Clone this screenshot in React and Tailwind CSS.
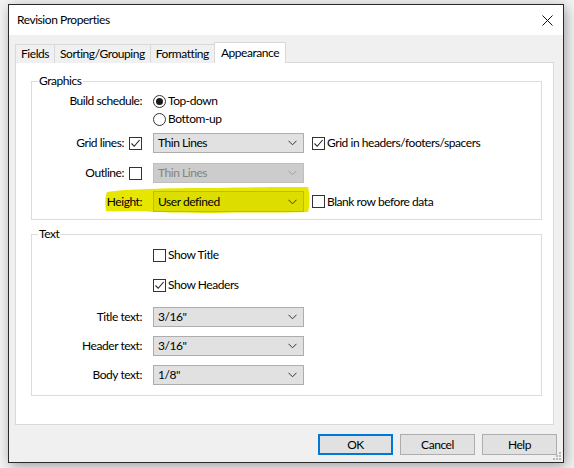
import React from 'react';

const FONT = { fontFamily: 'Lato, "Liberation Sans", sans-serif' };

function Check({ checked }) {
  return (
    <span className="w-[13px] h-[13px] border border-[#333] bg-white flex items-center justify-center shrink-0">
      {checked && (
        <svg width="11" height="11" viewBox="0 0 11 11">
          <path d="M1.5 5.5 L4.2 8.3 L9.6 2" fill="none" stroke="#222" strokeWidth="1.1" />
        </svg>
      )}
    </span>
  );
}

function Radio({ checked }) {
  return (
    <span className="w-[13px] h-[13px] rounded-full border border-[#333] bg-white flex items-center justify-center shrink-0">
      {checked && <span className="w-[7px] h-[7px] rounded-full bg-[#1a1a1a]" />}
    </span>
  );
}

function Select({ value, disabled, marked }) {
  let look = 'bg-[#e1e1e1] border-[#adadad] text-black';
  if (disabled) look = 'bg-[#cccccc] border-[#bfbfbf] text-[#838383]';
  if (marked) look = 'bg-[rgba(0,0,0,0.04)] border-[#a8a8a8] text-black';
  return (
    <div className={`w-[151px] h-full border flex items-center pl-[4px] pr-[6px] ${look}`}>
      <span className="flex-1">{value}</span>
      <svg width="9" height="6" viewBox="0 0 9 6">
        <path d="M0.5 0.8 L4.5 4.8 L8.5 0.8" fill="none" stroke={disabled ? '#a0a0a0' : '#333'} strokeWidth="1" />
      </svg>
    </div>
  );
}

function GroupBox({ title, className, children }) {
  return (
    <div className={`relative border border-[#dcdcdc] ml-[15px] mr-[11px] ${className}`}>
      <span className="absolute -top-[9px] left-[6px] bg-white px-[1px] leading-[16px]">{title}</span>
      {children}
    </div>
  );
}

// label column ends at the same x for every row
function Row({ label, box, className, children }) {
  return (
    <div className={`flex items-center ${className}`}>
      <div className="w-[110px] flex items-center justify-end gap-[5px]">
        {label && <span>{label}</span>}
        {box}
      </div>
      <div className="ml-[11px] h-full flex items-center">{children}</div>
    </div>
  );
}

function Tab({ label, active }) {
  if (active) {
    return (
      <div className="relative z-10 h-[21px] bg-white border border-b-0 border-[#d9d9d9] -ml-px px-[6px] flex items-center">
        {label}
      </div>
    );
  }
  return (
    <div className="h-[19px] bg-[#f0f0f0] border border-b-0 border-[#d9d9d9] -ml-px first:ml-0 px-[5px] flex items-center">
      {label}
    </div>
  );
}

export default function App() {
  return (
    <div className="w-[574px] h-[468px] bg-[#f3f3f3] pt-[4px] pl-[8px] text-[12px] tracking-[-0.45px] text-black overflow-hidden" style={FONT}>
      <div className="relative w-[556px] h-[459px] border border-[#2a2a2a] bg-[#f0f0f0] shadow-[2px_3px_12px_rgba(0,0,0,0.35)] flex flex-col">
        {/* title bar */}
        <div className="h-[30px] bg-white flex items-center pl-[8px] pr-[10px]">
          <span className="flex-1">Revision Properties</span>
          <svg width="11" height="11" viewBox="0 0 11 11">
            <path d="M0.5 0.5 L10.5 10.5 M10.5 0.5 L0.5 10.5" stroke="#111" strokeWidth="1" />
          </svg>
        </div>

        <div className="pl-[6px] pr-[6px] pt-[7px]">
          <div className="flex items-end h-[21px] -mb-px">
            <Tab label="Fields" />
            <Tab label="Sorting/Grouping" />
            <Tab label="Formatting" />
            <Tab label="Appearance" active />
          </div>

          <div className="w-[539px] h-[363px] bg-white border border-[#d9d9d9] pt-[18px]">
            <GroupBox title="Graphics" className="pb-[7px]">
              <Row label="Build schedule:" className="mt-[10px] h-[18px]">
                <span className="flex items-center gap-[2px]"><Radio checked />Top-down</span>
              </Row>
              <Row className="h-[18px]">
                <span className="flex items-center gap-[2px]"><Radio />Bottom-up</span>
              </Row>
              <Row label="Grid lines:" box={<Check checked />} className="mt-[5px] h-[20px]">
                <Select value="Thin Lines" />
                <span className="flex items-center gap-[2px] ml-[8px]"><Check checked />Grid in headers/footers/spacers</span>
              </Row>
              <Row label="Outline:" box={<Check />} className="mt-[10px] h-[20px]">
                <Select value="Thin Lines" disabled />
              </Row>
              <div className="relative mt-[8px]">
                {/* marker stroke behind the height row */}
                <svg className="absolute left-[73px] -top-[4px] pointer-events-none" width="206" height="27" viewBox="0 0 206 27">
                  <path
                    d="M2 5 C20 2 60 1 110 1 C150 0 185 0 203 0 C205 8 205 18 203 25 C170 26 140 25 110 26 C80 26 50 25 30 24 C18 24 8 25 1 24 C0 17 0 10 2 5 Z"
                    fill="#e6e600"
                  />
                </svg>
                <Row label="Height:" className="relative h-[21px]">
                  <Select value="User defined" marked />
                  <span className="flex items-center gap-[2px] ml-[8px]"><Check />Blank row before data</span>
                </Row>
              </div>
            </GroupBox>

            <GroupBox title="Text" className="mt-[14px] pb-[10px]">
              <Row className="mt-[11px] h-[18px]">
                <span className="flex items-center gap-[2px]"><Check />Show Title</span>
              </Row>
              <Row className="mt-[12px] h-[18px]">
                <span className="flex items-center gap-[2px]"><Check checked />Show Headers</span>
              </Row>
              <Row label="Title text:" className="mt-[13px] h-[20px]">
                <Select value={'3/16"'} />
              </Row>
              <Row label="Header text:" className="mt-[9px] h-[20px]">
                <Select value={'3/16"'} />
              </Row>
              <Row label="Body text:" className="mt-[9px] h-[20px]">
                <Select value={'1/8"'} />
              </Row>
            </GroupBox>
          </div>

          <div className="flex justify-end gap-[7px] mt-[9px]">
            <button className="w-[75px] h-[21px] bg-[#e1e1e1] border-2 border-[#0078d7]">OK</button>
            <button className="w-[75px] h-[21px] bg-[#e1e1e1] border border-[#adadad]">Cancel</button>
            <button className="w-[75px] h-[21px] bg-[#e1e1e1] border border-[#adadad]">Help</button>
          </div>
        </div>

        {/* size grip */}
        <svg className="absolute right-[1px] bottom-[1px]" width="9" height="9" viewBox="0 0 9 9">
          <g fill="#b8b8b8">
            <rect x="6" y="0" width="2" height="2" />
            <rect x="3" y="3" width="2" height="2" />
            <rect x="6" y="3" width="2" height="2" />
            <rect x="0" y="6" width="2" height="2" />
            <rect x="3" y="6" width="2" height="2" />
            <rect x="6" y="6" width="2" height="2" />
          </g>
        </svg>
      </div>
    </div>
  );
}
